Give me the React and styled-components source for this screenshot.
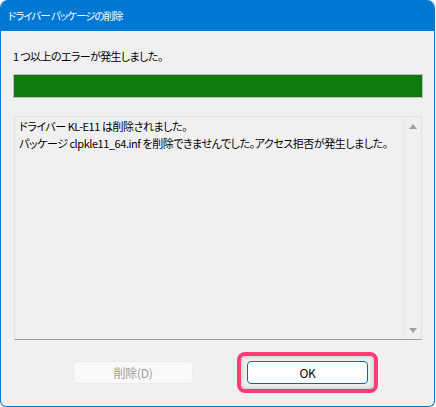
import React from "react"
import styled, { createGlobalStyle } from "styled-components"

const GlobalStyle = createGlobalStyle`
    html, body {
        margin: 0;
        background: #ffffff;
    }
    body {
        font-family: "Noto Sans CJK JP", "Noto Sans", sans-serif;
        font-feature-settings: "palt";
    }
`

const Window = styled.div`
    box-sizing: border-box;
    width: 435px;
    height: 407px;
    border: 1px solid #0078d4;
    border-top: none;
    border-radius: 8px 8px 6px 6px;
    background: #f0f0f0;
    overflow: hidden;
    display: flex;
    flex-direction: column;
`

const TitleBar = styled.div`
    height: 31px;
    margin: 0 -1px;
    padding-left: 8px;
    background: #0078d4;
    color: #ffffff;
    font-size: 10.5px;
    letter-spacing: -1px;
    display: flex;
    align-items: center;
`

const Body = styled.div`
    display: flex;
    flex-direction: column;
    padding: 17px 11px 0 12px;
`

const Message = styled.div`
    font-size: 11px;
    letter-spacing: -0.6px;
    line-height: 16px;
    color: #000000;
`

const Progress = styled.div`
    box-sizing: border-box;
    margin-top: 10px;
    height: 24px;
    border: 1px solid #bcbcbc;
    background: #e6e6e6;
`

const ProgressFill = styled.div`
    height: 100%;
    background: #107c10;
`

const LogBox = styled.div`
    box-sizing: border-box;
    margin: 18px 1px 0 1px;
    height: 224px;
    border: 1px solid #e2e2e2;
    border-bottom-color: #9a9a9a;
    display: flex;
`

const LogText = styled.div`
    flex: 1;
    min-width: 0;
    overflow: hidden;
    padding: 1px 4px;
    font-size: 11px;
    letter-spacing: -0.45px;
    line-height: 17px;
    color: #000000;
    white-space: pre;
`

const ScrollBar = styled.div`
    flex-shrink: 0;
    width: 17px;
    border-left: 1px solid #e6e6e6;
    display: flex;
    flex-direction: column;
    justify-content: space-between;
    align-items: center;
    padding: 7px 0 6px;
`

const Arrow = styled.div`
    width: 0;
    height: 0;
    border-left: 4px solid transparent;
    border-right: 4px solid transparent;
    ${({ down }) => down
        ? "border-top: 5px solid #a0a0a0;"
        : "border-bottom: 5px solid #a0a0a0;"}
`

const ButtonRow = styled.div`
    display: flex;
    align-items: center;
    margin-top: 12px;
    padding-left: 60px;
    gap: 44px;
`

const Button = styled.button`
    box-sizing: border-box;
    width: ${({ wide }) => (wide ? "121px" : "120px")};
    height: 23px;
    border-radius: 4px;
    font-family: "Noto Sans CJK JP", "Noto Sans", sans-serif;
    font-size: 12px;
    letter-spacing: -0.3px;
    padding: 0;
    border: 1px solid ${({ primary }) => (primary ? "#0067c0" : "#ebebeb")};
    background: ${({ primary }) => (primary ? "#ffffff" : "#f9f9f9")};
    color: ${({ disabled }) => (disabled ? "#9d9d9d" : "#000000")};
`

const Highlight = styled.div`
    padding: 5px 6px;
    border: 4px solid #fe3b77;
    border-radius: 8px;
    box-shadow: inset 0 0 5px rgba(0, 0, 0, 0.22);
    display: flex;
`

export default function App() {
    return (
        <>
            <GlobalStyle />
            <Window>
                <TitleBar>ドライバー パッケージの削除</TitleBar>
                <Body>
                    <Message>1 つ以上のエラーが発生しました。</Message>
                    <Progress>
                        <ProgressFill style={{ width: "100%" }} />
                    </Progress>
                    <LogBox>
                        <LogText>
                            {"ドライバー KL-E11 は削除されました。\nパッケージ clpkle11_64.inf を削除できませんでした。アクセス拒否が発生しました。"}
                        </LogText>
                        <ScrollBar>
                            <Arrow />
                            <Arrow down />
                        </ScrollBar>
                    </LogBox>
                    <ButtonRow>
                        <Button disabled>削除(D)</Button>
                        <Highlight>
                            <Button primary wide>OK</Button>
                        </Highlight>
                    </ButtonRow>
                </Body>
            </Window>
        </>
    )
}
